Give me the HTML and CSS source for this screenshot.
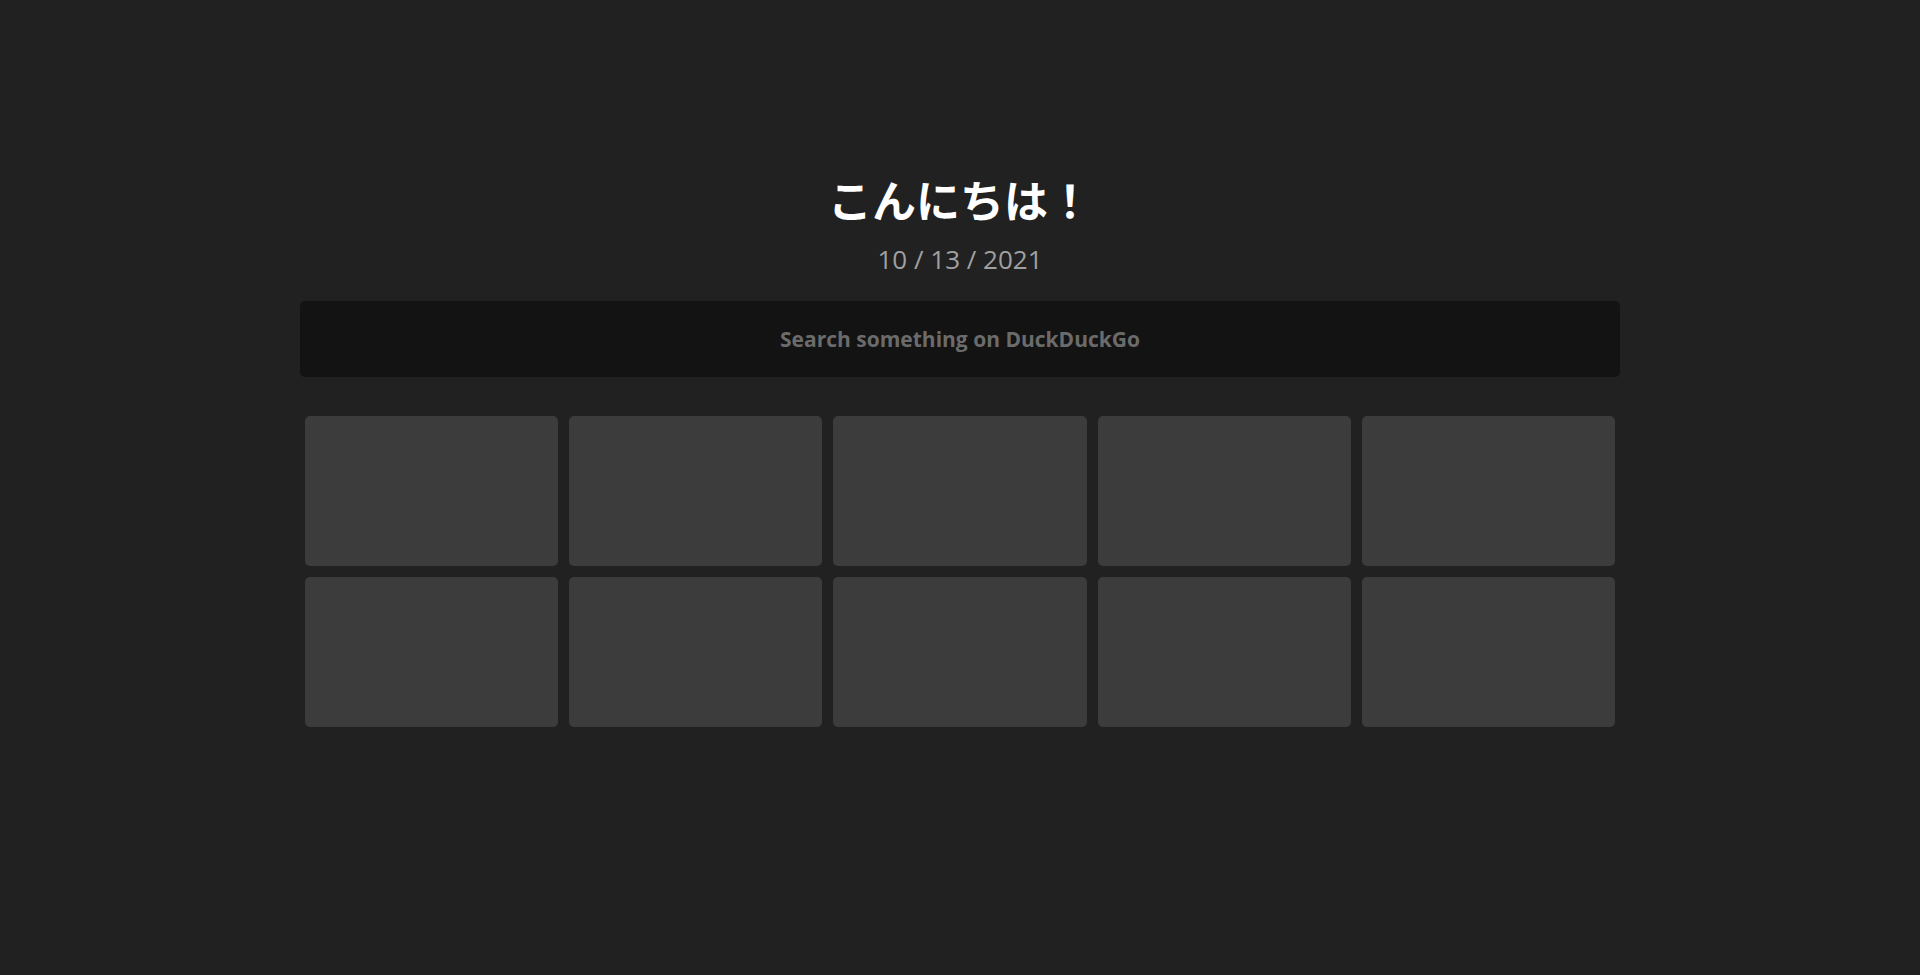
FILE: index.html
```html
<!DOCTYPE html>
<html lang="ja">
<head>
<meta charset="utf-8">
<title>New Tab</title>
<link rel="stylesheet" href="styles.css">
</head>
<body>
<main class="page">
  <h1 class="greeting">こんにちは！</h1>
  <p class="date">10 / 13 / 2021</p>
  <div class="search">Search something on DuckDuckGo</div>
  <div class="tiles">
    <div class="tile"></div>
    <div class="tile"></div>
    <div class="tile"></div>
    <div class="tile"></div>
    <div class="tile"></div>
    <div class="tile"></div>
    <div class="tile"></div>
    <div class="tile"></div>
    <div class="tile"></div>
    <div class="tile"></div>
  </div>
</main>
</body>
</html>
```

FILE: styles.css
```css
html, body {
  margin: 0;
  padding: 0;
  background: #212121;
  height: 100%;
}

.page {
  width: 1320px;
  margin: 0 auto;
  padding-top: 171px;
  display: flex;
  flex-direction: column;
  align-items: stretch;
  font-family: "Open Sans", "Noto Sans CJK JP", sans-serif;
}

.greeting {
  margin: 0;
  text-align: center;
  color: #ffffff;
  font-family: "Noto Sans CJK JP", sans-serif;
  font-weight: 700;
  font-size: 44px;
  line-height: 56px;
}

.date {
  margin: 15px 0 0;
  text-align: center;
  color: #a0a0a0;
  font-size: 26px;
  line-height: 34px;
}

.search {
  margin-top: 25px;
  height: 76px;
  background: #131313;
  border-radius: 5px;
  color: #6b6b6b;
  font-size: 21px;
  font-weight: 700;
  display: flex;
  align-items: center;
  justify-content: center;
}

.tiles {
  margin-top: 34px;
  padding: 5px;
  display: grid;
  grid-template-columns: repeat(5, 1fr);
  grid-auto-rows: 150px;
  gap: 11px;
}

.tile {
  background: #3c3c3c;
  border-radius: 5px;
}
```
